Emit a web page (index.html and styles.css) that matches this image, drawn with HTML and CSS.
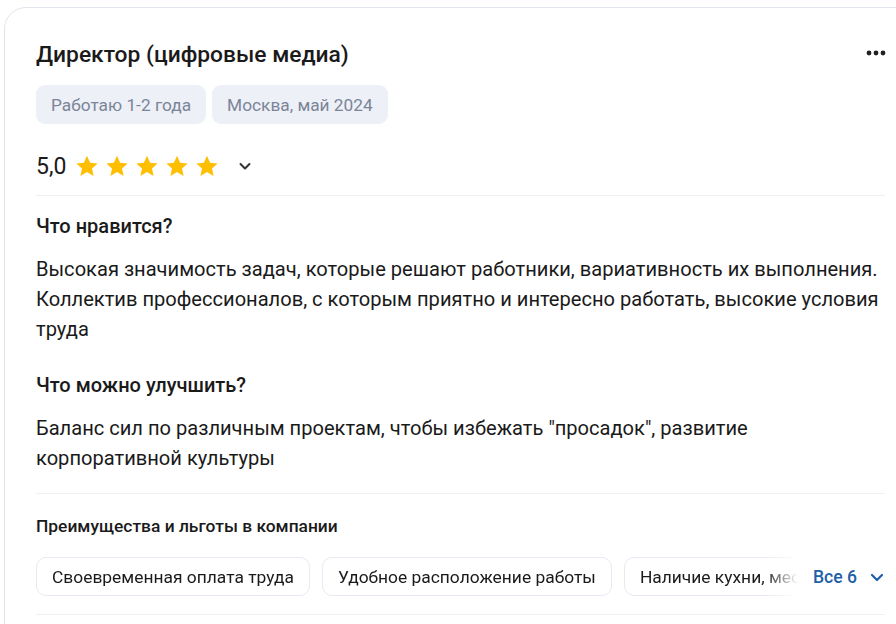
FILE: index.html
```html
<!DOCTYPE html>
<html lang="ru">
<head>
    <meta charset="UTF-8">
    <meta name="viewport" content="width=device-width, initial-scale=1.0">
    <title>Отзыв</title>
    <link rel="stylesheet" href="styles.css">
</head>
<body>
    <div class="review">
        <!-- Header: position, meta chips, menu -->
        <div class="review-head">
            <h2 class="review-title">Директор (цифровые медиа)</h2>
            <button class="more" aria-label="Ещё">
                <svg width="20" height="6" viewBox="0 0 20 6"><circle cx="3" cy="3" r="2.4"/><circle cx="10" cy="3" r="2.4"/><circle cx="17" cy="3" r="2.4"/></svg>
            </button>
        </div>
        <div class="meta">
            <span class="meta-chip">Работаю 1-2 года</span>
            <span class="meta-chip">Москва, май 2024</span>
        </div>

        <!-- Rating -->
        <div class="rating">
            <span class="rating-value">5,0</span>
            <div class="stars">
                <svg class="star" viewBox="0 0 24 24"><path d="M12 1.8l3.1 6.9 7.5.8-5.6 5 1.6 7.4L12 18.1l-6.6 3.8L7 14.5l-5.6-5 7.5-.8z"/></svg>
                <svg class="star" viewBox="0 0 24 24"><path d="M12 1.8l3.1 6.9 7.5.8-5.6 5 1.6 7.4L12 18.1l-6.6 3.8L7 14.5l-5.6-5 7.5-.8z"/></svg>
                <svg class="star" viewBox="0 0 24 24"><path d="M12 1.8l3.1 6.9 7.5.8-5.6 5 1.6 7.4L12 18.1l-6.6 3.8L7 14.5l-5.6-5 7.5-.8z"/></svg>
                <svg class="star" viewBox="0 0 24 24"><path d="M12 1.8l3.1 6.9 7.5.8-5.6 5 1.6 7.4L12 18.1l-6.6 3.8L7 14.5l-5.6-5 7.5-.8z"/></svg>
                <svg class="star" viewBox="0 0 24 24"><path d="M12 1.8l3.1 6.9 7.5.8-5.6 5 1.6 7.4L12 18.1l-6.6 3.8L7 14.5l-5.6-5 7.5-.8z"/></svg>
            </div>
            <svg class="chevron" width="14" height="14" viewBox="0 0 14 14"><path d="M2.5 5l4.5 4.5L11.5 5" fill="none" stroke="#333" stroke-width="2" stroke-linecap="round" stroke-linejoin="round"/></svg>
        </div>

        <!-- Texts -->
        <div class="section">
            <h3 class="section-title">Что нравится?</h3>
            <p class="section-text">Высокая значимость задач, которые решают работники, вариативность их выполнения. Коллектив профессионалов, с которым приятно и интересно работать, высокие условия труда</p>

            <h3 class="section-title">Что можно улучшить?</h3>
            <p class="section-text">Баланс сил по различным проектам, чтобы избежать "просадок", развитие корпоративной культуры</p>
        </div>

        <!-- Benefits -->
        <div class="benefits">
            <h4 class="benefits-title">Преимущества и льготы в компании</h4>
            <div class="benefits-row">
                <div class="benefits-list">
                    <span class="benefit">Своевременная оплата труда</span>
                    <span class="benefit">Удобное расположение работы</span>
                    <span class="benefit">Наличие кухни, места для обеда</span>
                </div>
                <button class="show-all">Все 6
                    <svg width="16" height="16" viewBox="0 0 16 16"><path d="M3 6l5 5 5-5" fill="none" stroke="#1f5fa8" stroke-width="2.2" stroke-linecap="round" stroke-linejoin="round"/></svg>
                </button>
            </div>
        </div>
    </div>
</body>
</html>
```

FILE: styles.css
```css
/* Base */
body {
    margin: 0;
    font-family: Roboto, "Noto Sans", Arial, sans-serif;
    color: #1a1a1a;
    background-color: #fff;
    overflow: hidden;
}

/* Review card */
.review {
    margin: 7px 0 0 4px;
    width: 914px;
    box-sizing: border-box;
    padding: 30px 32px 40px 31px;
    border: 1px solid #e1e6ee;
    border-radius: 22px;
    background-color: #fff;
}

.review-head {
    display: flex;
    justify-content: space-between;
    align-items: center;
}

.review-title {
    margin: 0;
    font-size: 22.8px;
    font-weight: 500;
    line-height: 34px;
}

.more {
    border: none;
    background: none;
    padding: 0;
    margin: 0 -1px 4px 0;
    display: flex;
    fill: #222;
}

/* Meta chips */
.meta {
    display: flex;
    gap: 6px;
    margin-top: 13px;
}

.meta-chip {
    padding: 0 15px;
    height: 39px;
    display: flex;
    align-items: center;
    border-radius: 9px;
    background-color: #edf0f7;
    color: #7b8597;
    font-size: 17.3px;
}

/* Rating */
.rating {
    display: flex;
    align-items: center;
    height: 40px;
    margin-top: 22px;
    padding-bottom: 9px;
    border-bottom: 1px solid #eef0f3;
}

.rating-value {
    font-size: 23px;
    font-weight: 400;
    margin-right: 9px;
}

.stars {
    display: flex;
    gap: 6px;
}

.star {
    width: 24px;
    height: 24px;
    fill: #ffbf00;
}

.chevron {
    margin-left: 19px;
}

/* Pros / cons */
.section {
    padding-top: 15px;
    padding-bottom: 20px;
    border-bottom: 1px solid #eef0f3;
}

.section-title {
    margin: 0 0 13px;
    font-size: 20px;
    font-weight: 500;
    line-height: 30px;
}

.section-text {
    margin: 0 0 26px;
    font-size: 20.1px;
    line-height: 30px;
}

.section-text:last-child {
    margin-bottom: 0;
}

/* Benefits */
.benefits {
    padding-top: 21px;
    padding-bottom: 18px;
    border-bottom: 1px solid #eef0f3;
}

.benefits-title {
    margin: 0 0 20px;
    font-size: 17.4px;
    font-weight: 500;
    line-height: 22px;
}

.benefits-row {
    display: flex;
    align-items: center;
}

.benefits-list {
    display: flex;
    gap: 12px;
    width: 768px;
    overflow: hidden;
    -webkit-mask-image: linear-gradient(to right, #000 728px, transparent 762px);
    mask-image: linear-gradient(to right, #000 728px, transparent 762px);
}

.benefit {
    flex-shrink: 0;
    height: 37px;
    display: flex;
    align-items: center;
    padding: 0 15px;
    border: 1px solid #e6e9f2;
    border-radius: 10px;
    font-size: 17.4px;
    white-space: nowrap;
}

.show-all {
    display: flex;
    align-items: center;
    gap: 12px;
    margin-left: 9px;
    border: none;
    background: none;
    padding: 0;
    font-family: inherit;
    font-size: 17.6px;
    font-weight: 500;
    color: #1f5fa8;
}
```
